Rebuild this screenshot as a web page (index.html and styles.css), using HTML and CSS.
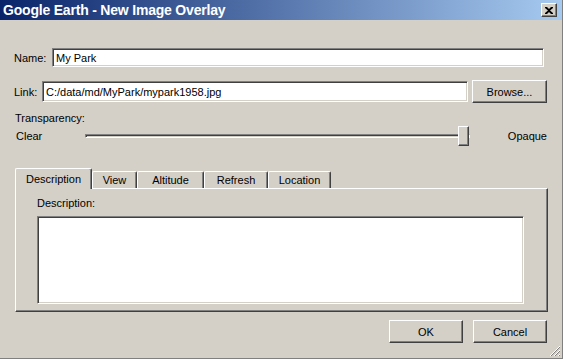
FILE: index.html
```html
<!DOCTYPE html>
<html lang="en">
<head>
    <meta charset="UTF-8">
    <title>Google Earth - New Image Overlay</title>
    <link rel="stylesheet" href="styles.css">
</head>
<body>
    <div class="window">
        <div class="titlebar">
            <span class="title">Google Earth - New Image Overlay</span>
            <button class="close">
                <svg width="8" height="7" viewBox="0 0 8 7"><path d="M0 0h2l2 2 2-2h2v1L5 3.5 8 6v1H6L4 5 2 7H0V6l3-2.5L0 1z" fill="#000"/></svg>
            </button>
        </div>
        <div class="content">
            <div class="row name-row">
                <label class="lbl name-lbl">Name:</label>
                <input class="field" type="text" value="My Park">
            </div>
            <div class="row link-row">
                <label class="lbl link-lbl">Link:</label>
                <input class="field" type="text" value="C:/data/md/MyPark/mypark1958.jpg">
                <button class="btn browse">Browse...</button>
            </div>
            <div class="transp">Transparency:</div>
            <div class="row slider-row">
                <span class="clear">Clear</span>
                <div class="track">
                    <div class="thumb"></div>
                </div>
                <span class="opaque">Opaque</span>
            </div>
            <div class="tabs">
                <div class="tab active">Description</div>
                <div class="tab" style="width:45px">View</div>
                <div class="tab" style="width:67px">Altitude</div>
                <div class="tab" style="width:64px">Refresh</div>
                <div class="tab" style="width:63px">Location</div>
            </div>
            <div class="panel">
                <div class="desc-lbl">Description:</div>
                <textarea class="field desc"></textarea>
            </div>
            <div class="row actions">
                <button class="btn">OK</button>
                <button class="btn">Cancel</button>
            </div>
        </div>
        <svg class="grip" width="12" height="12" viewBox="0 0 12 12">
            <path d="M11 1L1 11M11 5L5 11M11 9L9 11" stroke="#fff" stroke-width="1"/>
            <path d="M11 2L2 11M11 6L6 11M11 10L10 11" stroke="#808080" stroke-width="1"/>
        </svg>
    </div>
</body>
</html>
```

FILE: styles.css
```css
html, body {
    margin: 0;
    padding: 0;
}
body {
    background: #d4d0c8;
    font-family: "Liberation Sans", Arial, sans-serif;
    font-size: 11px;
    color: #000;
}
.window {
    position: relative;
    width: 563px;
    height: 359px;
    box-sizing: border-box;
    border-right: 1px solid #808080;
    border-bottom: 1px solid #808080;
    background: #d4d0c8;
}
.titlebar {
    height: 20px;
    display: flex;
    align-items: center;
    justify-content: space-between;
    padding: 0 5px 0 3px;
    background: linear-gradient(to right, #0a246a, #a6caf0);
}
.title {
    color: #fff;
    font-weight: bold;
    font-size: 14px;
    letter-spacing: -0.2px;
}
.close {
    width: 16px;
    height: 14px;
    padding: 0;
    display: flex;
    align-items: center;
    justify-content: center;
    background: #d4d0c8;
    border: 1px solid;
    border-color: #fff #404040 #404040 #fff;
    box-shadow: inset -1px -1px #808080;
}
.content {
    padding: 0 14px;
}
.row {
    display: flex;
    align-items: center;
}
.lbl {
    flex: none;
}
.field {
    box-sizing: border-box;
    background: #fff;
    border: 1px solid;
    border-color: #808080 #fff #fff #808080;
    box-shadow: inset 1px 1px #404040, inset -1px -1px #d4d0c8;
    font-family: inherit;
    font-size: 11px;
    padding: 0 3px;
    outline: none;
}
.name-row {
    margin-top: 28px;
    height: 19px;
    margin-right: 4px;
}
.name-lbl {
    width: 38px;
}
.name-row .field {
    flex: 1;
    height: 19px;
}
.link-row {
    margin-top: 13px;
    height: 23px;
    margin-right: 1px;
}
.link-lbl {
    width: 28px;
}
.link-row .field {
    width: 426px;
    height: 21px;
}
.btn {
    box-sizing: border-box;
    height: 23px;
    width: 75px;
    background: #d4d0c8;
    border: 1px solid;
    border-color: #fff #404040 #404040 #fff;
    box-shadow: inset -1px -1px #808080;
    font-family: inherit;
    font-size: 11px;
    color: #000;
    padding: 0;
}
.browse {
    margin-left: auto;
}
.transp {
    margin-top: 9px;
    height: 12px;
    line-height: 12px;
    padding-left: 1px;
}
.slider-row {
    margin-top: 2px;
    height: 20px;
    padding-left: 2px;
    margin-right: 1px;
}
.clear {
    width: 69px;
}
.track {
    position: relative;
    width: 385px;
    height: 4px;
    box-sizing: border-box;
    border: 1px solid;
    border-color: #808080 #fff #fff #808080;
    box-shadow: inset 1px 1px #404040;
}
.thumb {
    position: absolute;
    left: 372px;
    top: -9px;
    width: 11px;
    height: 20px;
    box-sizing: border-box;
    background: #d4d0c8;
    border: 1px solid;
    border-color: #fff #404040 #404040 #fff;
    box-shadow: inset -1px -1px #808080;
}
.opaque {
    margin-left: auto;
}
.tabs {
    margin-top: 22px;
    margin-left: 1px;
    height: 20px;
    display: flex;
    align-items: flex-end;
}
.tab {
    box-sizing: border-box;
    height: 17px;
    line-height: 16px;
    text-align: center;
    border: 1px solid;
    border-bottom: none;
    border-color: #fff #404040 #404040 #fff;
    box-shadow: inset -1px 0 #808080;
    border-radius: 2px 2px 0 0;
}
.tab.active {
    width: 77px;
    height: 21px;
    line-height: 20px;
    position: relative;
    z-index: 1;
    margin-bottom: -1px;
    background: #d4d0c8;
}
.panel {
    margin-left: 1px;
    height: 124px;
    box-sizing: border-box;
    border: 1px solid;
    border-color: #fff #404040 #404040 #fff;
    box-shadow: inset -1px -1px #808080;
    padding: 8px 0 0 21px;
}
.desc-lbl {
    height: 12px;
    line-height: 12px;
}
.desc {
    display: block;
    margin-top: 7px;
    width: 487px;
    height: 88px;
    resize: none;
}
.actions {
    margin-top: 8px;
    justify-content: flex-end;
    gap: 10px;
    margin-right: 1px;
}
.actions .btn {
    width: 74px;
}
.grip {
    position: absolute;
    right: 1px;
    bottom: 1px;
}
```
